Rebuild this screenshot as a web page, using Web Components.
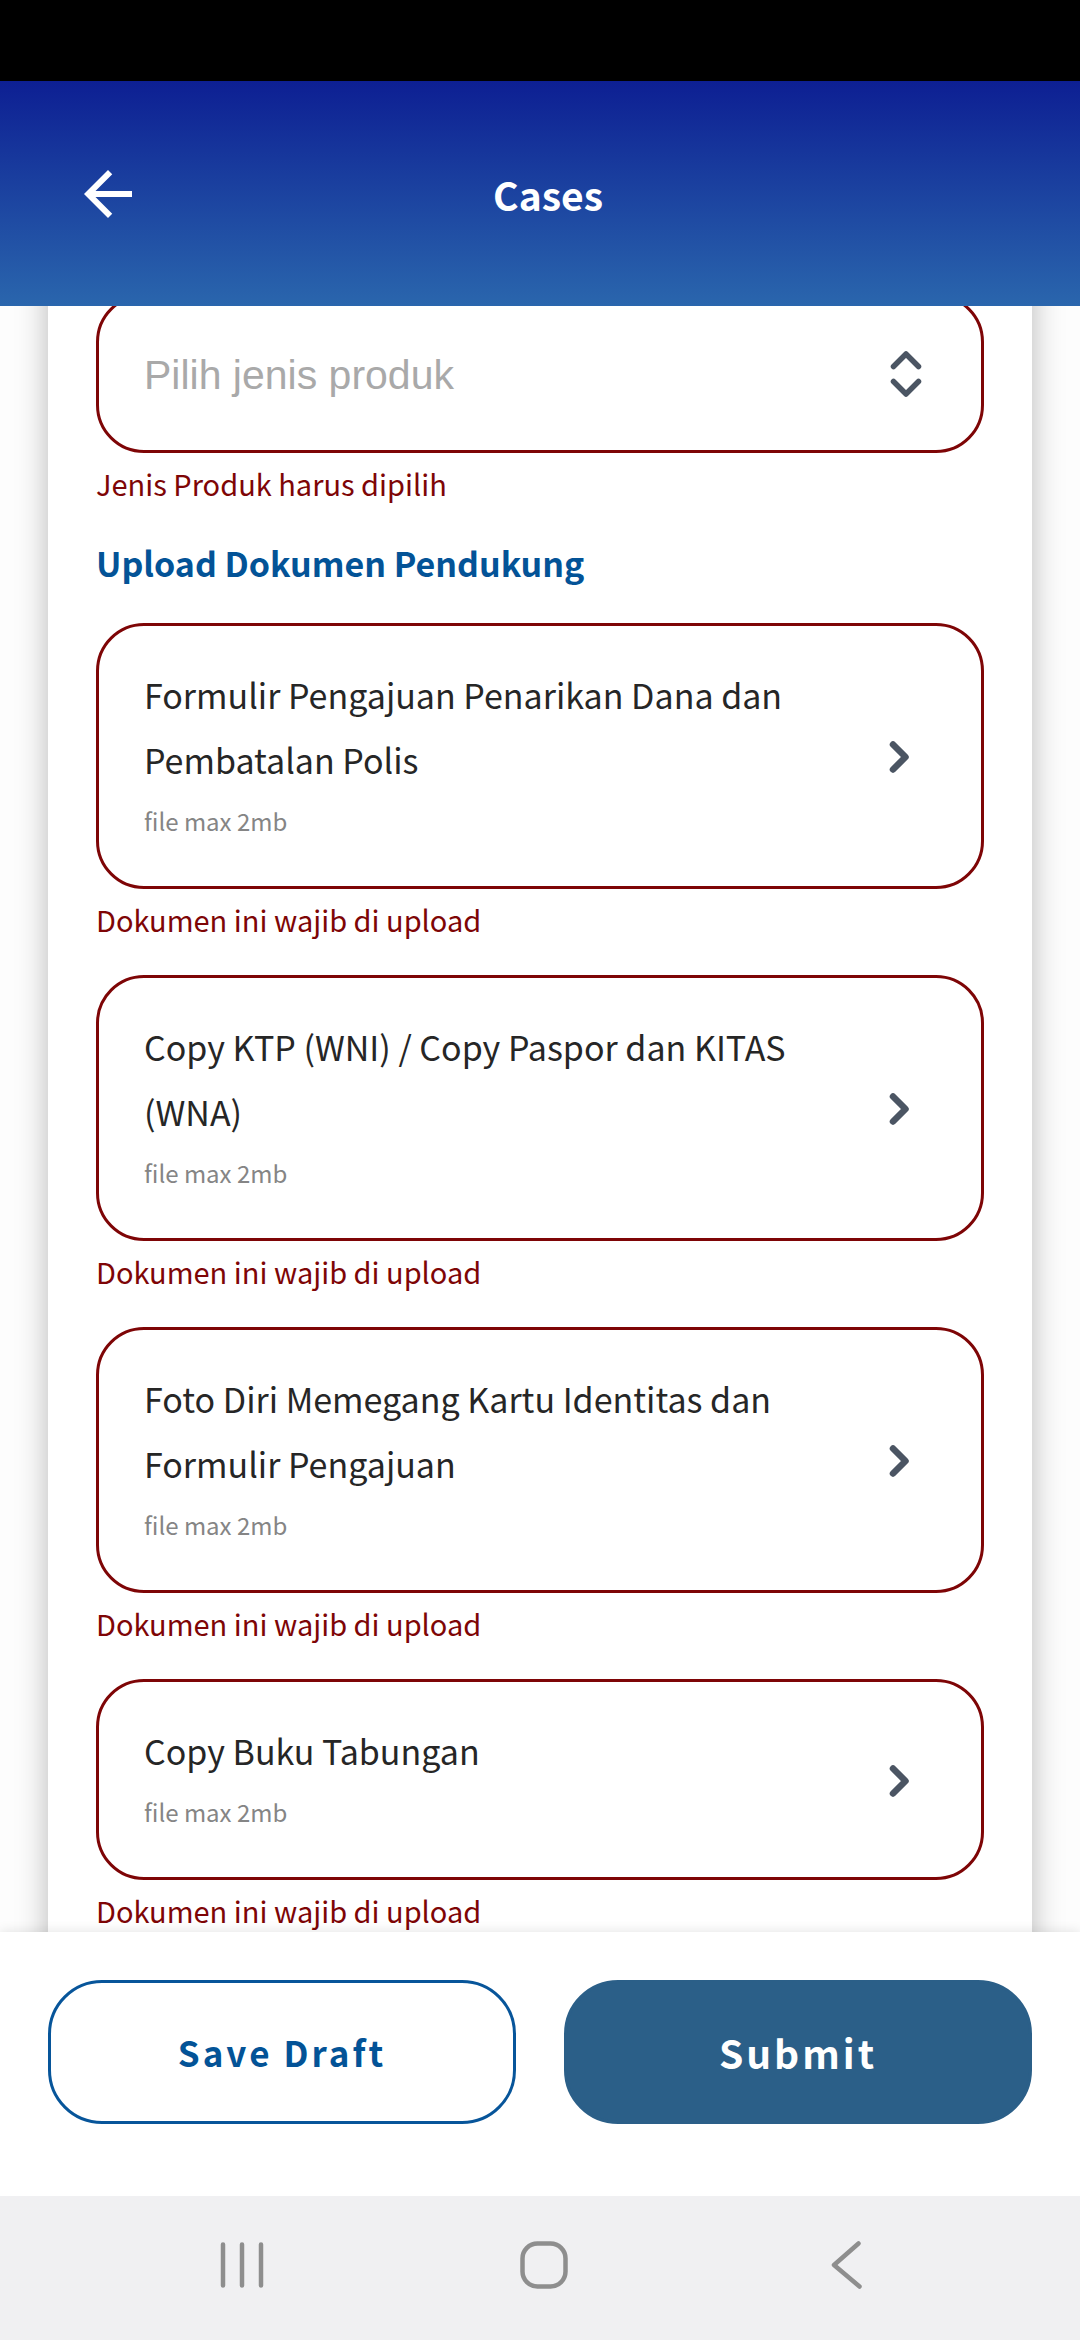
<!DOCTYPE html>
<html lang="id">
<head>
<meta charset="utf-8">
<meta name="viewport" content="width=device-width, initial-scale=1">
<title>Cases</title>
<style>
  html, body { margin: 0; height: 100%; }
  body { font-family: "Noto Sans CJK JP", "Noto Sans", sans-serif; background: #fdfdfd; color: #262626; }
</style>
</head>
<body>
<case-page>
  <app-header slot="header">Cases</app-header>
  <form-card>
    <select-field error="Jenis Produk harus dipilih" placeholder="Pilih jenis produk" label="Jenis Produk"></select-field>
    <section-title>Upload Dokumen Pendukung</section-title>
    <upload-field note="file max 2mb" error="Dokumen ini wajib di upload">Formulir Pengajuan Penarikan Dana dan Pembatalan Polis</upload-field>
    <upload-field note="file max 2mb" error="Dokumen ini wajib di upload">Copy KTP (WNI) / Copy Paspor dan KITAS (WNA)</upload-field>
    <upload-field note="file max 2mb" error="Dokumen ini wajib di upload">Foto Diri Memegang Kartu Identitas dan Formulir Pengajuan</upload-field>
    <upload-field note="file max 2mb" error="Dokumen ini wajib di upload">Copy Buku Tabungan</upload-field>
  </form-card>
  <action-bar slot="footer">
    <action-button variant="outline">Save Draft</action-button>
    <action-button variant="solid">Submit</action-button>
  </action-bar>
  <system-nav slot="footer"></system-nav>
</case-page>

<script>
  const define = (name, html, setup) => {
    const template = document.createElement('template');
    template.innerHTML = html;
    customElements.define(name, class extends HTMLElement {
      constructor() {
        super();
        this.attachShadow({ mode: 'open' }).append(template.content.cloneNode(true));
      }
      connectedCallback() {
        if (setup) setup(this, this.shadowRoot);
      }
    });
  };

  define('case-page', `
    <style>
      :host { display: flex; flex-direction: column; height: 100vh; }
      main { flex: 1 1 0; min-height: 0; overflow: hidden; padding: 0 48px; }
      .footer { position: relative; box-shadow: 0 0 12px rgba(0,0,0,.12); }
    </style>
    <slot name="header"></slot>
    <main><slot></slot></main>
    <div class="footer"><slot name="footer"></slot></div>`);

  define('app-header', `
    <style>
      :host { display: block; }
      .status { height: 81px; background: #000; }
      header { display: flex; align-items: center; height: 225px; box-sizing: border-box; padding: 0 128px 0 72px;
        background: linear-gradient(#0d1f93, #2a66ad); color: #fff; }
      button { border: 0; padding: 0; background: none; color: inherit; width: 72px; height: 72px; }
      svg { display: block; width: 72px; height: 72px; }
      h1 { flex: 1; margin: 0; text-align: center; font-size: 39px; line-height: 56px; font-weight: 700; }
    </style>
    <div class="status"></div>
    <header>
      <button type="button" aria-label="Kembali"><svg viewBox="0 0 24 24"><path fill="currentColor" d="M20 11H7.83l5.59-5.59L12 4l-8 8 8 8 1.41-1.41L7.83 13H20v-2z"/></svg></button>
      <h1><slot></slot></h1>
    </header>`);

  define('form-card', `
    <style>
      :host { display: flex; flex-direction: column; margin-top: -60px; padding: 48px 48px 96px; background: #fff;
        box-shadow: 0 0 30px rgba(0,0,0,.28); }
    </style>
    <slot></slot>`);

  define('section-title', `
    <style>
      :host { display: block; margin: 19px 0 29px; }
      h2 { margin: 0; font-size: 34px; line-height: 62px; font-weight: 700; color: #035397; }
    </style>
    <h2><slot></slot></h2>`);

  define('select-field', `
    <style>
      :host { display: block; }
      .box { display: grid; align-items: center; }
      .box > * { grid-area: 1 / 1; }
      select { appearance: none; box-sizing: border-box; width: 100%; height: 159px; margin: 0; padding: 2px 105px 0 45px;
        border: 3px solid #7e0506; border-radius: 48px; background: transparent;
        font: 41px/48px "Liberation Sans", sans-serif; color: #a9a9a9; }
      svg { justify-self: end; width: 60px; height: 60px; margin-right: 48px; pointer-events: none; }
      p { margin: 0; font-size: 29px; line-height: 60px; color: #7e0506; }
    </style>
    <div class="box">
      <select id="choice" aria-describedby="error"><option></option></select>
      <svg viewBox="0 0 60 60" fill="none" stroke="#4b5563" stroke-width="5.5" stroke-linecap="round" stroke-linejoin="round"><path d="M17.5 22.5L30 10l12.5 12.5M17.5 37.5L30 50l12.5-12.5"/></svg>
    </div>
    <p id="error"></p>`, (host, root) => {
      root.querySelector('select').setAttribute('aria-label', host.getAttribute('label'));
      root.querySelector('option').textContent = host.getAttribute('placeholder');
      root.querySelector('p').textContent = host.getAttribute('error');
    });

  define('upload-field', `
    <style>
      :host { display: block; margin-bottom: 26px; }
      button { display: flex; align-items: center; gap: 36px; box-sizing: border-box; width: 100%; margin: 0; padding: 36px 45px;
        border: 3px solid #7e0506; border-radius: 48px; background: transparent; font: inherit; color: inherit; text-align: left; }
      .text { flex: 1; display: flex; flex-direction: column; }
      .name { font-size: 34px; line-height: 65px; }
      .note { font-size: 24px; line-height: 58px; color: #858585; }
      svg { flex: none; width: 60px; height: 60px; }
      p { margin: 0; font-size: 29px; line-height: 60px; color: #7e0506; }
    </style>
    <button type="button" aria-describedby="error">
      <span class="text"><span class="name"><slot></slot></span><span class="note"></span></span>
      <svg viewBox="0 0 60 60" fill="none" stroke="#4b5563" stroke-width="6.5" stroke-linecap="round" stroke-linejoin="round"><path d="M17 18.5L29.5 31 17 43.5"/></svg>
    </button>
    <p id="error"></p>`, (host, root) => {
      root.querySelector('.note').textContent = host.getAttribute('note');
      root.querySelector('p').textContent = host.getAttribute('error');
    });

  define('action-bar', `
    <style>
      :host { display: grid; grid-template-columns: 1fr 1fr; gap: 48px; padding: 48px 48px 72px; background: #fff; }
    </style>
    <slot></slot>`);

  define('action-button', `
    <style>
      :host { display: block; }
      button { box-sizing: border-box; width: 100%; height: 144px; margin: 0; padding: 0; border: 3px solid #07559a;
        border-radius: 54px; background: #fff; color: #035397; font: inherit; font-weight: 700; font-size: 35px;
        line-height: 56px; letter-spacing: 3px; }
      :host([variant="solid"]) button { border-color: #2b5f88; background: #2b5f88; color: #fff; font-size: 39px; }
    </style>
    <button type="button"><slot></slot></button>`);

  define('system-nav', `
    <style>
      :host { display: block; }
      nav { display: flex; align-items: center; justify-content: center; gap: 254px; height: 144px; box-sizing: border-box;
        padding: 0 0 6px 8px; background: #f0f0f2; }
      button { border: 0; padding: 0; background: none; width: 48px; height: 48px; }
      svg { display: block; width: 48px; height: 48px; fill: none; stroke: #8e8e8e; stroke-width: 4.5; stroke-linecap: round; stroke-linejoin: round; }
    </style>
    <nav>
      <button type="button" aria-label="Recents"><svg viewBox="0 0 48 48"><path d="M5 3.5v41M24 3.5v41M43 3.5v41"/></svg></button>
      <button type="button" aria-label="Home"><svg viewBox="0 0 48 48"><rect x="2.5" y="2.5" width="43" height="43" rx="15"/></svg></button>
      <button type="button" aria-label="Back"><svg viewBox="0 0 48 48"><path d="M36.5 2.5L12 24l25.5 21.5"/></svg></button>
    </nav>`);
</script>
</body>
</html>
